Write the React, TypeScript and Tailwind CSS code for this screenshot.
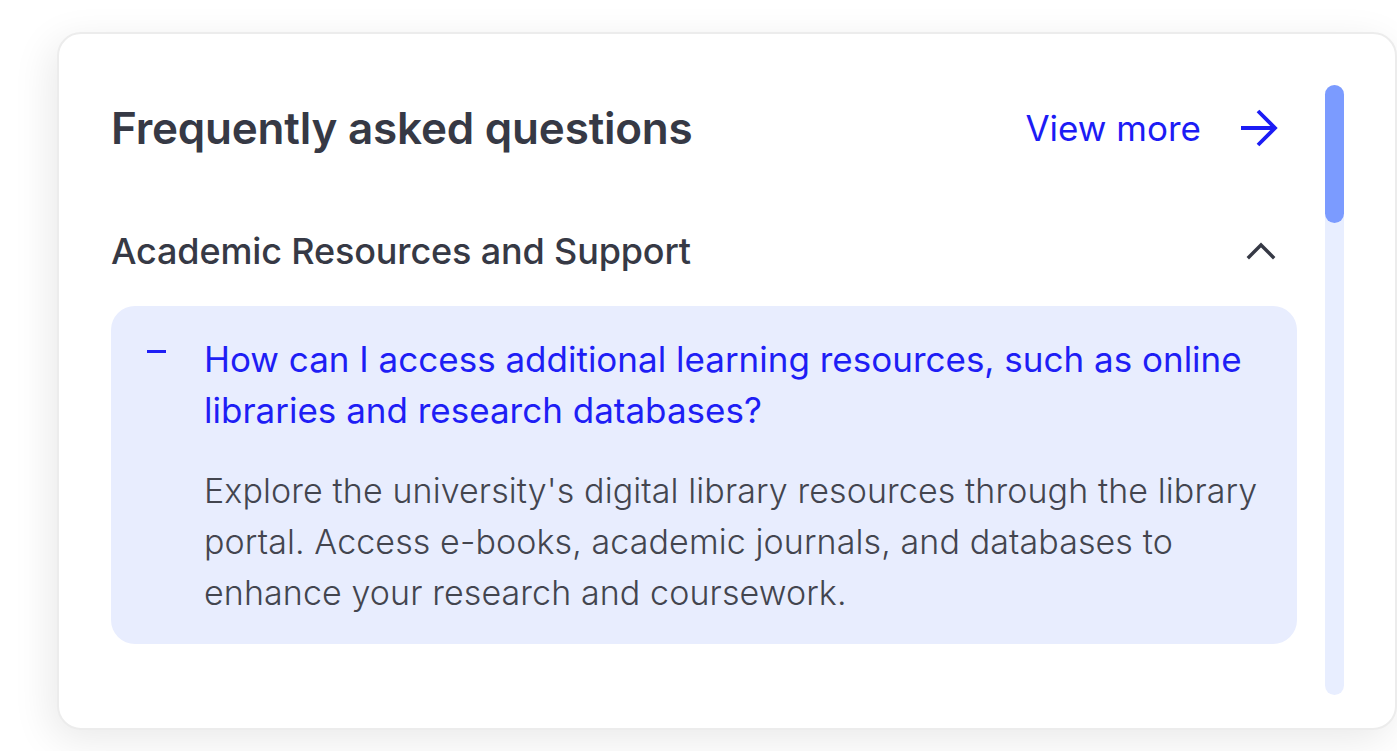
import React from 'react';

const font = { fontFamily: 'Inter, "Noto Sans", sans-serif' };

const ArrowRight: React.FC = () => (
  <svg width="38" height="38" viewBox="0 0 38 38" fill="none" stroke="currentColor" strokeWidth="3.8">
    <path d="M0 19h34" />
    <path d="M17 2l17 17-17 17" />
  </svg>
);

const ChevronUp: React.FC = () => (
  <svg width="30" height="18" viewBox="0 0 30 18" fill="none" stroke="currentColor" strokeWidth="3.4" strokeLinecap="square">
    <path d="M3 15L15 3l12 12" />
  </svg>
);

const FaqItem: React.FC = () => (
  <div className="mt-[25px] rounded-[24px] bg-[#e8edfe] pl-[36px] pr-[30px] pt-[28px] pb-[26px]">
    <div className="flex">
      <div className="w-[57px] shrink-0 pt-[16px]">
        <div className="h-[3px] w-[19px] bg-[#1e1ef5]" />
      </div>
      <div>
        <p className="text-[35px] leading-[51px] text-[#1e1ef5]">
          <span className="block whitespace-nowrap">How can I access additional learning resources, such as online</span>
          <span className="block whitespace-nowrap">libraries and research databases?</span>
        </p>
        <p className="mt-[29px] text-[34px] leading-[51px] font-light text-[#43454f] tracking-[0.1px]">
          <span className="block whitespace-nowrap">Explore the university's digital library resources through the library</span>
          <span className="block whitespace-nowrap">portal. Access e-books, academic journals, and databases to</span>
          <span className="block whitespace-nowrap">enhance your research and coursework.</span>
        </p>
      </div>
    </div>
  </div>
);

export default function App() {
  return (
    <div className="min-h-screen bg-white pl-[57px] pt-[32px]" style={font}>
      <div className="flex h-[698px] w-[1340px] rounded-[24px] border-2 border-[#ececec] bg-white pl-[52px] pr-[51px] pt-[51px] pb-[33px] shadow-[-6px_10px_40px_rgba(0,0,0,0.09)]">
        <div className="flex-1 pr-[28px]">
          <div className="flex h-[86px] items-center justify-between pr-[18px]">
            <h1 className="text-[44px] font-semibold text-[#363945] tracking-[-0.2px]">Frequently asked questions</h1>
            <a className="flex items-center gap-[40px] text-[35px] text-[#1c1cf5]">
              View more
              <ArrowRight />
            </a>
          </div>
          <div className="mt-[50px] flex h-[60px] items-center justify-between pr-[21px]">
            <h2 className="text-[36px] font-medium text-[#363945] tracking-[-0.15px]">Academic Resources and Support</h2>
            <span className="text-[#363945]">
              <ChevronUp />
            </span>
          </div>
          <FaqItem />
        </div>
        <div className="w-[19px] rounded-full bg-[#e8eeff]">
          <div className="h-[138px] rounded-full bg-[#7b9bff]" />
        </div>
      </div>
    </div>
  );
}
